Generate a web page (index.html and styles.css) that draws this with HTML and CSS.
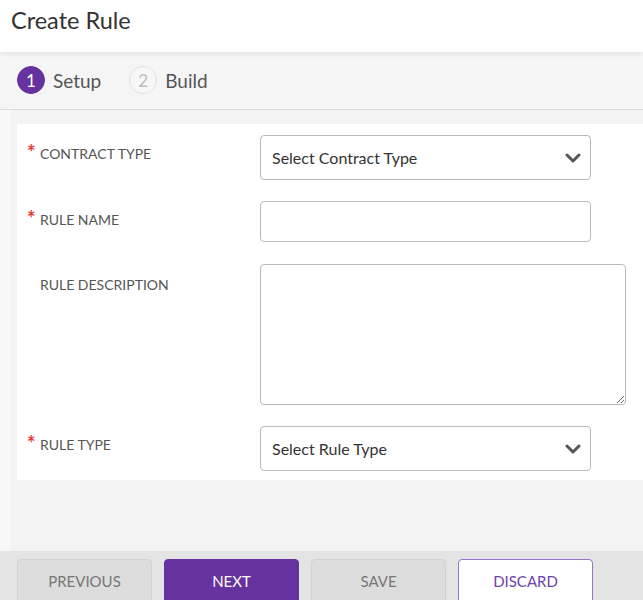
FILE: index.html
```html
<!DOCTYPE html>
<html lang="en">
<head>
<meta charset="utf-8">
<title>Create Rule</title>
<link rel="stylesheet" href="styles.css">
</head>
<body>
<div class="page">
  <header class="header">
    <h1 class="title">Create Rule</h1>
  </header>
  <nav class="steps">
    <div class="step active"><span class="step-num">1</span><span class="step-label">Setup</span></div>
    <div class="step"><span class="step-num">2</span><span class="step-label">Build</span></div>
  </nav>
  <main class="content">
    <div class="inner">
      <form class="panel">
        <div class="row">
          <label class="label"><span class="req">*</span>CONTRACT TYPE</label>
          <div class="select">
            <span>Select Contract Type</span>
            <svg class="chev" width="16" height="10" viewBox="0 0 16 10"><polyline points="2,2 8,8 14,2" fill="none" stroke="#555" stroke-width="3" stroke-linecap="round" stroke-linejoin="round"/></svg>
          </div>
        </div>
        <div class="row">
          <label class="label"><span class="req">*</span>RULE NAME</label>
          <input class="input" type="text">
        </div>
        <div class="row row-desc">
          <label class="label label-desc"><span class="req"></span>RULE DESCRIPTION</label>
          <textarea class="textarea"></textarea>
        </div>
        <div class="row">
          <label class="label"><span class="req">*</span>RULE TYPE</label>
          <div class="select">
            <span>Select Rule Type</span>
            <svg class="chev" width="16" height="10" viewBox="0 0 16 10"><polyline points="2,2 8,8 14,2" fill="none" stroke="#555" stroke-width="3" stroke-linecap="round" stroke-linejoin="round"/></svg>
          </div>
        </div>
      </form>
    </div>
  </main>
  <footer class="footer">
    <button class="btn btn-gray" type="button">PREVIOUS</button>
    <button class="btn btn-primary" type="button">NEXT</button>
    <button class="btn btn-gray" type="button">SAVE</button>
    <button class="btn btn-outline" type="button">DISCARD</button>
  </footer>
</div>
</body>
</html>
```
FILE: styles.css
```css
* { box-sizing: border-box; }
html, body { margin: 0; padding: 0; }
body {
  font-family: Lato, "Noto Sans", "Liberation Sans", sans-serif;
  color: #333;
  background: #f8f8f8;
}
.page {
  width: 643px;
  height: 600px;
  display: flex;
  flex-direction: column;
  overflow: hidden;
}
.header {
  height: 52px;
  background: #fff;
  padding: 0 11px;
  display: flex;
  align-items: center;
  position: relative;
  z-index: 2;
  box-shadow: 0 2px 5px rgba(0,0,0,0.07);
}
.title {
  margin: 0 0 13px;
  font-size: 23.5px;
  font-weight: 400;
  color: #333;
}
.steps {
  height: 58px;
  background: #f5f5f5;
  border-bottom: 1px solid #dcdcdc;
  display: flex;
  align-items: center;
  padding: 0 17px 1px;
  gap: 28px;
}
.step { display: flex; align-items: center; gap: 8px; }
.step-num {
  width: 28px;
  height: 28px;
  border-radius: 50%;
  display: flex;
  align-items: center;
  justify-content: center;
  font-size: 17px;
  color: #bbb;
  border: 1px solid #e2e2e2;
  background: #f7f7f7;
}
.step.active .step-num {
  background: #65329f;
  border-color: #65329f;
  color: #fff;
}
.step-label { font-size: 19px; color: #555; }
.content {
  flex: 1;
  background: #f8f8f8;
  padding-left: 11px;
  display: flex;
}
.inner {
  flex: 1;
  background: #f3f3f3;
  padding: 14px 0 0 6px;
}
.panel {
  background: #fff;
  padding: 11px 0 9px;
  display: flex;
  flex-direction: column;
  gap: 21px;
}
.row { display: flex; align-items: flex-start; }
.label {
  width: 243px;
  padding-left: 10px;
  margin-top: 10px;
  font-size: 14px;
  line-height: 18px;
  color: #555;
  display: flex;
}
.label-desc { margin-top: 13px; }
.req {
  width: 13px;
  color: #e53935;
  font-size: 20px;
  font-weight: 700;
  line-height: 14px;
}
.select, .input {
  width: 331px;
  border: 1px solid #b9b9b9;
  border-radius: 4px;
  background: #fff;
}
.select {
  height: 45px;
  display: flex;
  align-items: center;
  justify-content: space-between;
  padding: 0 9px 0 11px;
  font-size: 16px;
  color: #333;
}
.chev { margin-top: 1px; }
.input { height: 41px; font: inherit; }
.textarea {
  display: block;
  width: 366px;
  height: 141px;
  margin: 1px 0 0;
  border: 1px solid #b9b9b9;
  border-radius: 4px;
  font: inherit;
  resize: both;
}
.footer {
  height: 49px;
  flex: none;
  background: #e4e4e4;
  padding: 8px 17px 0;
  display: flex;
  gap: 12px;
  align-items: flex-start;
}
.btn {
  width: 135px;
  height: 46px;
  flex: none;
  border-radius: 4px;
  font-family: inherit;
  font-size: 15px;
  padding: 0 0 3px;
  border: 1px solid #d2d2d2;
}
.btn-gray { background: #dddddd; color: #777; }
.btn-primary { background: #65329f; border-color: #65329f; color: #fff; }
.btn-outline { background: #fff; border-color: #9573c6; color: #6d43a8; }
```
